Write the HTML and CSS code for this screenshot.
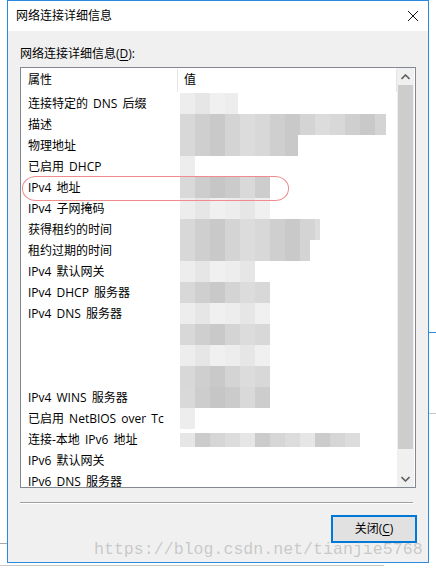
FILE: index.html
```html
<!DOCTYPE html>
<html lang="zh-CN">
<head>
<meta charset="utf-8">
<title>网络连接详细信息</title>
<link rel="stylesheet" href="styles.css">
</head>
<body>
<div class="desk">
  <div class="bgline bg1"></div>
  <div class="bgline bg2"></div>
  <div class="bgline bg3"></div>
  <div class="bgline bg4"></div>

  <div class="window">
    <div class="titlebar">
      <span class="title">网络连接详细信息</span>
      <svg class="close" width="12" height="12" viewBox="0 0 12 12"><path d="M1 1 L11 11 M11 1 L1 11" stroke="#111" stroke-width="1" fill="none"/></svg>
    </div>
    <div class="body">
      <div class="label">网络连接详细信息(<u>D</u>):</div>
      <div class="listbox">
        <div class="listmain">
          <div class="header">
            <div class="hcell c1">属性</div>
            <div class="hcell c2">值</div>
          </div>
          <div class="rows">
            <div class="row"><div class="c1">连接特定的 DNS 后缀</div><div class="c2"><span class="blur light" style="width:58px"></span></div></div>
            <div class="row"><div class="c1">描述</div><div class="c2"><span class="blur mid" style="width:206px"></span></div></div>
            <div class="row"><div class="c1">物理地址</div><div class="c2"><span class="blur mid" style="width:118px"></span></div></div>
            <div class="row"><div class="c1">已启用 DHCP</div><div class="c2"><span class="blur light" style="width:15px"></span></div></div>
            <div class="row"><div class="c1">IPv4 地址</div><div class="c2"><span class="blur dark" style="width:90px"></span></div></div>
            <div class="row"><div class="c1">IPv4 子网掩码</div><div class="c2"><span class="blur light" style="width:90px"></span></div></div>
            <div class="row"><div class="c1">获得租约的时间</div><div class="c2"><span class="blur mid" style="width:140px"></span></div></div>
            <div class="row"><div class="c1">租约过期的时间</div><div class="c2"><span class="blur mid" style="width:130px"></span></div></div>
            <div class="row"><div class="c1">IPv4 默认网关</div><div class="c2"><span class="blur light" style="width:75px"></span></div></div>
            <div class="row"><div class="c1">IPv4 DHCP 服务器</div><div class="c2"><span class="blur mid" style="width:90px"></span></div></div>
            <div class="row"><div class="c1">IPv4 DNS 服务器</div><div class="c2"><span class="blur light" style="width:90px"></span></div></div>
            <div class="row"><div class="c1"></div><div class="c2"><span class="blur mid" style="width:90px"></span></div></div>
            <div class="row"><div class="c1"></div><div class="c2"><span class="blur light" style="width:90px"></span></div></div>
            <div class="row"><div class="c1"></div><div class="c2"><span class="blur mid" style="width:90px"></span></div></div>
            <div class="row"><div class="c1">IPv4 WINS 服务器</div><div class="c2"><span class="blur dark" style="width:90px"></span></div></div>
            <div class="row"><div class="c1">已启用 NetBIOS over Tc</div><div class="c2"><span class="blur light" style="width:15px"></span></div></div>
            <div class="row"><div class="c1">连接-本地 IPv6 地址</div><div class="c2"><span class="blur thin" style="width:180px"></span></div></div>
            <div class="row"><div class="c1">IPv6 默认网关</div><div class="c2"></div></div>
            <div class="row"><div class="c1">IPv6 DNS 服务器</div><div class="c2"></div></div>
          </div>
        </div>
        <div class="scrollbar">
          <div class="sbtn"><svg width="9" height="6" viewBox="0 0 9 6"><path d="M0.5 5 L4.5 1 L8.5 5" stroke="#606060" stroke-width="1.6" fill="none"/></svg></div>
          <div class="thumb"></div>
          <div class="track"></div>
          <div class="sbtn"><svg width="9" height="6" viewBox="0 0 9 6"><path d="M0.5 1 L4.5 5 L8.5 1" stroke="#606060" stroke-width="1.6" fill="none"/></svg></div>
        </div>
      </div>
      <div class="separator"></div>
      <div class="footer">
        <button class="btn">关闭(<u>C</u>)</button>
      </div>
    </div>
  </div>

  <div class="mark"></div>
  <div class="watermark">https://blog.csdn.net/tianjie5768</div>
</div>
</body>
</html>
```

FILE: styles.css
```css
* { box-sizing: border-box; }
html, body {
  margin: 0;
  padding: 0;
  background: #ffffff;
}
body {
  font-family: "Open Sans", "Noto Sans CJK SC", sans-serif;
  font-size: 12px;
  color: #000;
}
.desk {
  position: relative;
  width: 436px;
  height: 570px;
  overflow: hidden;
}
.bgline { position: absolute; height: 1px; }
.bg1 { left: 0; top: 543px; width: 8px; background: #a8a8a8; }
.bg2 { left: 0; top: 565px; width: 384px; background: #c8c8c8; }
.bg3 { left: 429px; top: 332px; width: 7px; background: #2a8ae0; }
.bg4 { left: 429px; top: 413px; width: 7px; background: #c8c8c8; }

.window {
  position: relative;
  margin-left: 7px;
  width: 422px;
  height: 563px;
  border: 1px solid #2a8ae0;
  background: #f0f0f0;
  display: flex;
  flex-direction: column;
}
.titlebar {
  height: 30px;
  background: #fff;
  display: flex;
  align-items: center;
  justify-content: space-between;
  padding: 0 9px 0 8px;
  flex: none;
}
.title { line-height: 16px; }
.close { display: block; }

.body {
  flex: 1;
  padding: 0 12px;
  display: flex;
  flex-direction: column;
}
.label {
  margin-top: 15px;
  line-height: 16px;
  height: 16px;
}
.label u, .btn u { text-decoration: underline; text-underline-offset: 2px; }
.listbox {
  margin-top: 5px;
  height: 421px;
  border: 1px solid #828790;
  background: #fff;
  display: flex;
}
.listmain {
  flex: 1;
  overflow: hidden;
  min-width: 0;
}
.header {
  height: 25px;
  display: flex;
  padding-top: 1px;
}
.hcell {
  height: 23px;
  line-height: 22px;
  border-right: 1px solid #e5e5e5;
}
.c1 { width: 157px; padding-left: 7px; white-space: nowrap; overflow: hidden; flex: none; }
.c2 { flex: 1; padding-left: 6px; }
.rows { display: flex; flex-direction: column; }
.row {
  height: 21px;
  line-height: 21px;
  display: flex;
  flex: none;
  word-spacing: 2px;
}
.row .c2 { padding-left: 2px; display: flex; }
.blur {
  display: block;
  height: 21px;
  filter: blur(0.6px);
}
.blur.light { background: repeating-linear-gradient(90deg, #ededed 0 15px, #e6e6e6 15px 30px, #f0f0f0 30px 45px); }
.blur.mid { background: repeating-linear-gradient(90deg, #d8d8d8 0 15px, #cfcfcf 15px 30px, #c9c9c9 30px 45px, #d4d4d4 45px 60px, #dcdcdc 60px 75px); }
.blur.dark { background: repeating-linear-gradient(90deg, #d9d9d9 0 15px, #cdcdcd 15px 30px, #c6c6c6 30px 45px, #cbcbcb 45px 60px); }
.blur.thin { height: 14px; margin-top: 4px; background: repeating-linear-gradient(90deg, #e6e6e6 0 15px, #cbcbcb 15px 30px, #d6d6d6 30px 45px, #dcdcdc 45px 60px); }

.scrollbar {
  width: 17px;
  flex: none;
  display: flex;
  flex-direction: column;
  margin-right: 1px;
  background: #f0f0f0;
}
.sbtn {
  height: 17px;
  display: flex;
  align-items: center;
  justify-content: center;
  flex: none;
}
.thumb {
  height: 364px;
  background: #cdcdcd;
  margin: 0 1px;
  flex: none;
}
.track { flex: 1; }

.separator {
  margin-top: 14px;
  height: 1px;
  width: 393px;
  background: #a0a0a0;
  box-shadow: 0 1px 0 #fff;
}
.footer {
  margin-top: 12px;
  display: flex;
  justify-content: flex-end;
  margin-right: -1px;
}
.btn {
  width: 86px;
  height: 28px;
  border: 2px solid #0078d7;
  background: #e1e1e1;
  font-family: "Open Sans", "Noto Sans CJK SC", sans-serif;
  font-size: 12px;
  color: #000;
  padding: 0;
  line-height: 20px;
}

.mark {
  position: absolute;
  left: 22px;
  top: 176px;
  width: 267px;
  height: 25px;
  border: 1.5px solid #f08c8c;
  border-radius: 14px / 12px;
}
.watermark {
  position: absolute;
  left: 94px;
  top: 539px;
  font-family: "Liberation Mono", monospace;
  font-size: 16.6px;
  line-height: 22px;
  color: rgba(150, 150, 150, 0.45);
  white-space: nowrap;
}
```
